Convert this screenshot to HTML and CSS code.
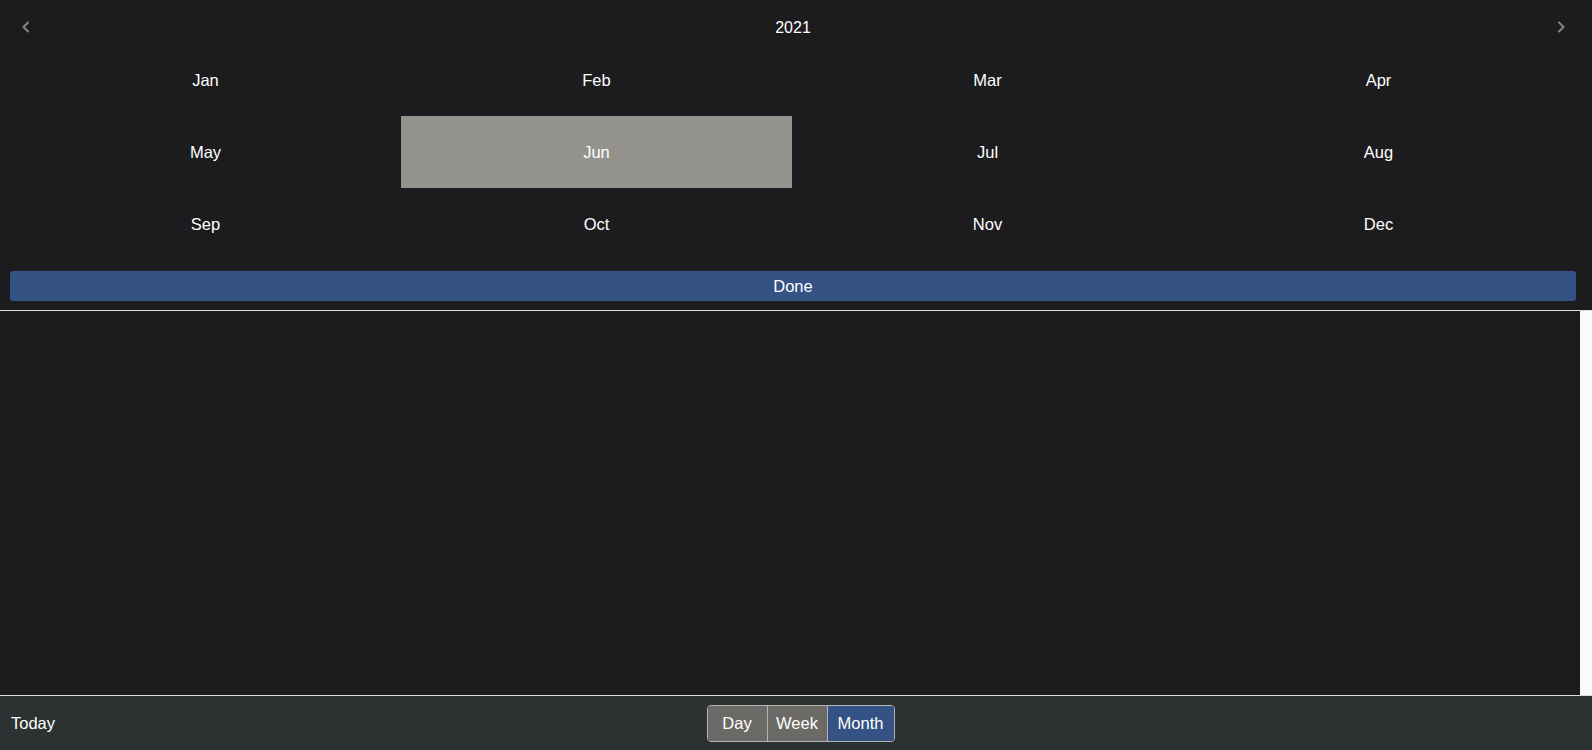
FILE: index.html
```html
<!DOCTYPE html>
<html lang="en">
<head>
<meta charset="utf-8">
<title>Month picker</title>
<link rel="stylesheet" href="styles.css">
</head>
<body>
<div class="app">
  <section class="picker">
    <header class="picker-head">
      <button class="nav-btn" aria-label="Previous year">
        <svg width="8" height="12" viewBox="0 0 8 12"><path d="M6.5 1 L1.5 6 L6.5 11" fill="none" stroke="currentColor" stroke-width="2"/></svg>
      </button>
      <div class="year">2021</div>
      <button class="nav-btn" aria-label="Next year">
        <svg width="8" height="12" viewBox="0 0 8 12"><path d="M1.5 1 L6.5 6 L1.5 11" fill="none" stroke="currentColor" stroke-width="2"/></svg>
      </button>
    </header>
    <div class="months">
      <div class="month">Jan</div>
      <div class="month">Feb</div>
      <div class="month">Mar</div>
      <div class="month">Apr</div>
      <div class="month">May</div>
      <div class="month selected">Jun</div>
      <div class="month">Jul</div>
      <div class="month">Aug</div>
      <div class="month">Sep</div>
      <div class="month">Oct</div>
      <div class="month">Nov</div>
      <div class="month">Dec</div>
    </div>
    <button class="done">Done</button>
  </section>
  <main class="content">
    <div class="content-pane"></div>
  </main>
  <footer class="toolbar">
    <a class="today">Today</a>
    <div class="view-group">
      <button class="view-btn day">Day</button>
      <button class="view-btn week">Week</button>
      <button class="view-btn month-btn active">Month</button>
    </div>
    <div class="spacer"></div>
  </footer>
</div>
</body>
</html>
```

FILE: styles.css
```css
* { box-sizing: border-box; }

html, body {
  margin: 0;
  padding: 0;
  height: 100%;
}

body {
  background: #fafafa;
  font-family: "Liberation Sans", Arial, sans-serif;
  font-size: 16px;
  color: #ffffff;
  overflow: hidden;
}

.app {
  display: flex;
  flex-direction: column;
  height: 750px;
}

.picker {
  background: #1c1c1e;
  padding: 10px 16px 9px 10px;
  border-bottom: 1px solid #dcdcdc;
}

.picker-head {
  display: flex;
  align-items: center;
  justify-content: space-between;
  height: 34px;
}

.nav-btn {
  background: none;
  border: 0;
  padding: 0;
  width: 32px;
  height: 34px;
  display: flex;
  align-items: center;
  justify-content: center;
  color: #858585;
}

.nav-btn:first-child { justify-content: flex-start; padding-left: 12px; }
.nav-btn:last-child { justify-content: flex-end; padding-right: 11px; }

.year {
  font-size: 16px;
  line-height: 34px;
  padding-top: 1px;
  color: #ffffff;
}

.months {
  display: grid;
  grid-template-columns: repeat(4, 1fr);
  grid-auto-rows: 72px;
  margin-right: 2px;
}

.month {
  display: flex;
  align-items: center;
  justify-content: center;
  padding-top: 1px;
  color: #ffffff;
  font-size: 16.5px;
}

.month.selected {
  background: #93928c;
}

.done {
  display: block;
  width: 100%;
  height: 30px;
  margin-top: 11px;
  border: 0;
  border-radius: 3px;
  background: #345284;
  color: #ffffff;
  font-family: inherit;
  font-size: 16.5px;
  padding: 1px 0 0;
}

.content {
  flex: 1;
  display: flex;
  min-height: 0;
}

.content-pane {
  width: 1580px;
  background: #1c1c1e;
}

.toolbar {
  height: 55px;
  border-top: 1px solid #dcdcdc;
  background: #2c3232;
  display: grid;
  grid-template-columns: 1fr auto 1fr;
  align-items: center;
  padding: 0 2px 0 11px;
}

.today {
  color: #ffffff;
  font-size: 16.5px;
  justify-self: start;
}

.view-group {
  display: flex;
  border: 1px solid #b4b4b4;
  border-radius: 4px;
  overflow: hidden;
  height: 37px;
}

.view-btn {
  padding: 0;
  border: 0;
  border-left: 1px solid #b4b4b4;
  background: #6b6a66;
  color: #ffffff;
  font-family: inherit;
  font-size: 16.5px;
  line-height: 34px;
  text-align: center;
}

.view-btn.day { width: 59px; border-left: 0; }
.view-btn.week { width: 60px; }
.view-btn.month-btn { width: 67px; }

.view-btn.active {
  background: #345284;
}
```
